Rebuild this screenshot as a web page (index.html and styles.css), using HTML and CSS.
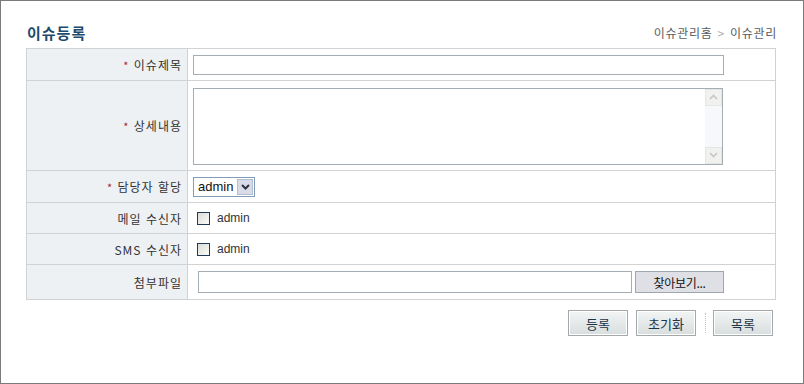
FILE: index.html
```html
<!DOCTYPE html>
<html lang="ko">
<head>
    <meta charset="UTF-8">
    <title>이슈등록</title>
    <link rel="stylesheet" href="styles.css">
</head>
<body>
    <div class="frame">
        <!-- 제목 + 경로 -->
        <div class="title-bar">
            <h1 class="page-title">이슈등록</h1>
            <div class="path">이슈관리홈 <span class="gt">&gt;</span> 이슈관리</div>
        </div>

        <table class="form-table">
            <tr class="row-title">
                <th><span class="req">*</span> 이슈제목</th>
                <td><input type="text" class="txt-title"></td>
            </tr>
            <tr class="row-content">
                <th><span class="req">*</span> 상세내용</th>
                <td>
                    <div class="area-box">
                        <textarea class="area"></textarea>
                        <div class="scroll">
                            <span class="arrow">
                                <svg width="9" height="6" viewBox="0 0 9 6"><path d="M1 5 L4.5 1.5 L8 5" fill="none" stroke="#c3c8c8" stroke-width="1.6"/></svg>
                            </span>
                            <span class="arrow">
                                <svg width="9" height="6" viewBox="0 0 9 6"><path d="M1 1 L4.5 4.5 L8 1" fill="none" stroke="#c3c8c8" stroke-width="1.6"/></svg>
                            </span>
                        </div>
                    </div>
                </td>
            </tr>
            <tr class="row-owner">
                <th><span class="req">*</span> 담당자 할당</th>
                <td>
                    <div class="select">
                        <span class="select-val">admin</span>
                        <span class="select-btn">
                            <svg width="9" height="6" viewBox="0 0 9 6"><path d="M1 1 L4.5 4.5 L8 1" fill="none" stroke="#2a3442" stroke-width="2"/></svg>
                        </span>
                    </div>
                </td>
            </tr>
            <tr class="row-check">
                <th>메일 수신자</th>
                <td><label class="chk"><span class="box"></span>admin</label></td>
            </tr>
            <tr class="row-check">
                <th>SMS 수신자</th>
                <td><label class="chk"><span class="box"></span>admin</label></td>
            </tr>
            <tr class="row-file">
                <th>첨부파일</th>
                <td>
                    <div class="file">
                        <span class="file-name"></span>
                        <button type="button" class="file-btn">찾아보기...</button>
                    </div>
                </td>
            </tr>
        </table>

        <div class="btn-area">
            <button type="button" class="btn">등록</button>
            <button type="button" class="btn">초기화</button>
            <span class="sep"></span>
            <button type="button" class="btn">목록</button>
        </div>
    </div>
</body>
</html>
```

FILE: styles.css
```css
* {
    margin: 0;
    padding: 0;
    box-sizing: border-box;
}

body {
    font-family: "Noto Sans CJK KR", "Noto Sans", sans-serif;
    font-size: 12px;
    color: #333;
    background: #fff;
}

.frame {
    width: 804px;
    height: 384px;
    border: 1px solid #7b7b7b;
    padding: 0 27px 0 25px;
}

/* 제목 */
.title-bar {
    height: 47px;
    display: flex;
    justify-content: space-between;
    align-items: flex-end;
    padding-bottom: 5px;
}

.page-title {
    font-size: 15px;
    font-weight: bold;
    color: #1d4a6d;
    line-height: 20px;
    letter-spacing: 1px;
    margin-left: 1px;
}

.path {
    font-size: 12px;
    color: #555c62;
    line-height: 18px;
    letter-spacing: 0.7px;
    margin-right: -1px;
    padding-bottom: 1px;
}

.path .gt {
    color: #aaa;
    margin: 0 1px;
}

/* 폼 테이블 */
.form-table {
    width: 750px;
    border-collapse: collapse;
    border: 1px solid #d2d2d2;
}

.form-table th,
.form-table td {
    border: 1px solid #d2d2d2;
    font-weight: normal;
    vertical-align: middle;
}

.form-table th {
    width: 161px;
    background: #eef1f4;
    text-align: right;
    padding-right: 5px;
    letter-spacing: 1px;
    color: #333;
}

.form-table td {
    padding-left: 5px;
}

.req {
    color: #a52a2a;
    font-size: 11px;
}

.row-title { height: 32px; }
.row-content { height: 90px; }
.row-owner { height: 32px; }
.row-check { height: 31px; }
.row-file { height: 35px; }

.txt-title {
    display: block;
    width: 531px;
    height: 20px;
    border: 1px solid #a5acb2;
    margin-top: 1px;
}

/* 상세내용 */
.area-box {
    width: 530px;
    height: 77px;
    border: 1px solid #a5acb2;
    display: flex;
    margin-top: 1px;
}

.area {
    flex: 1;
    border: none;
    resize: none;
    outline: none;
}

.scroll {
    width: 17px;
    background: #f7f8fc;
    display: flex;
    flex-direction: column;
    justify-content: space-between;
}

.arrow {
    height: 17px;
    border: 1px solid #e4e6e6;
    background: #f1f2f0;
    display: flex;
    align-items: center;
    justify-content: center;
}

/* 담당자 선택 */
.select {
    width: 62px;
    height: 20px;
    border: 1px solid #7f9db9;
    display: flex;
    align-items: center;
    font-family: "Liberation Sans", Arial, sans-serif;
    font-size: 13px;
    color: #111;
}

.select-val {
    flex: 1;
    padding-left: 4px;
    line-height: 18px;
}

.select-btn {
    width: 16px;
    height: 16px;
    margin-right: 1px;
    border: 1px solid #b6bdcc;
    background: #d8dce8;
    display: flex;
    align-items: center;
    justify-content: center;
}

/* 수신자 체크 */
.chk {
    display: flex;
    align-items: center;
    gap: 7px;
    margin-left: 4px;
    font-family: "Liberation Sans", Arial, sans-serif;
    font-size: 12px;
    letter-spacing: 0;
    color: #333;
}

.box {
    width: 13px;
    height: 13px;
    border: 1px solid #1c3c58;
    background: linear-gradient(135deg, #dcdcd6, #fbfbf9);
}

/* 첨부파일 */
.file {
    display: flex;
    gap: 3px;
    margin-left: 5px;
}

.file-name {
    width: 434px;
    height: 22px;
    border: 1px solid #a5acb2;
}

.file-btn {
    width: 89px;
    height: 22px;
    border: 1px solid #a0a6ae;
    background: #dfe0e6;
    font-family: inherit;
    font-size: 12px;
    letter-spacing: -0.3px;
    color: #111;
}

/* 하단 버튼 */
.btn-area {
    display: flex;
    justify-content: flex-end;
    align-items: center;
    gap: 8px;
    margin-top: 10px;
    margin-right: 3px;
}

.btn {
    width: 60px;
    height: 26px;
    border: 1px solid #a5a8aa;
    box-shadow: inset 0 0 0 1px #fff;
    background: linear-gradient(#f3f5f5, #d8dddd);
    font-family: inherit;
    font-size: 13px;
    color: #1d3446;
}

.sep {
    width: 1px;
    height: 20px;
    border-left: 1px dotted #c4c4c4;
    margin: 0 -1px 0 1px;
}
```
